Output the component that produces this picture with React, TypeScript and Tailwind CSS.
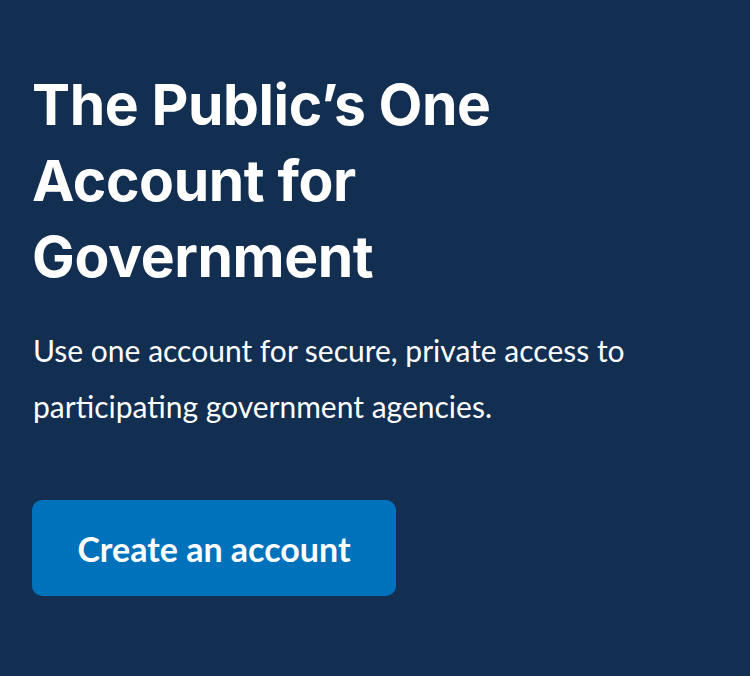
export default function App() {
  return (
    <div className="min-h-[676px] w-full bg-[#122e51] px-[32px] pt-[67px]">
      <h1 className="font-['Inter',sans-serif] text-[57px] font-bold leading-[76px] text-white tracking-[-0.4px]">
        The Public’s One
        <br />
        Account for
        <br />
        Government
      </h1>
      <p className="mt-[27px] pl-px font-['Lato',sans-serif] text-[30px] leading-[56px] text-white">
        Use one account for secure, private access to
        <br />
        participating government agencies.
      </p>
      <button className="mt-[66px] flex h-[96px] w-[364px] items-center justify-center rounded-[10px] bg-[#0071bb] font-['Lato',sans-serif] text-[34px] font-bold text-white">
        Create an account
      </button>
    </div>
  );
}
